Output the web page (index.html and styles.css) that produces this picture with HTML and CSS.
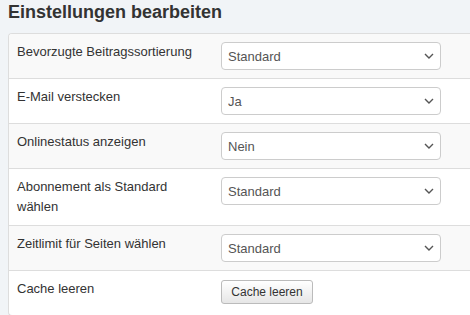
FILE: index.html
```html
<!DOCTYPE html>
<html lang="de">

<head>
    <meta charset="UTF-8">
    <meta name="viewport" content="width=device-width, initial-scale=1.0">
    <title>Einstellungen bearbeiten</title>
    <link rel="stylesheet" href="styles.css">
</head>

<body>
    <h2 class="page-title">Einstellungen bearbeiten</h2>

    <div class="settings-card">
        <table class="settings-table">
            <tr>
                <td class="label-cell">Bevorzugte Beitragssortierung</td>
                <td>
                    <select class="form-select">
                        <option>Standard</option>
                    </select>
                </td>
            </tr>
            <tr>
                <td class="label-cell">E-Mail verstecken</td>
                <td>
                    <select class="form-select">
                        <option>Ja</option>
                    </select>
                </td>
            </tr>
            <tr>
                <td class="label-cell">Onlinestatus anzeigen</td>
                <td>
                    <select class="form-select">
                        <option>Nein</option>
                    </select>
                </td>
            </tr>
            <tr>
                <td class="label-cell">Abonnement als Standard wählen</td>
                <td>
                    <select class="form-select">
                        <option>Standard</option>
                    </select>
                </td>
            </tr>
            <tr>
                <td class="label-cell">Zeitlimit für Seiten wählen</td>
                <td>
                    <select class="form-select">
                        <option>Standard</option>
                    </select>
                </td>
            </tr>
            <tr>
                <td class="label-cell">Cache leeren</td>
                <td>
                    <button type="button" class="btn">Cache leeren</button>
                </td>
            </tr>
        </table>
    </div>
</body>

</html>
```

FILE: styles.css
```css
html {
    overflow: hidden;
}

body {
    font-family: "Liberation Sans", Arial, sans-serif;
    font-size: 13px;
    line-height: 20px;
    color: #333;
    background-color: #f1f4f7;
    margin: 0;
    padding: 2px 0 0 8px;
}

.page-title {
    margin: 0 0 11px;
    font-size: 18px;
    line-height: 20px;
    font-weight: bold;
    color: #333;
}

.settings-card {
    background-color: #fff;
    border: 1px solid #ddd;
    border-right: none;
    border-radius: 4px 0 0 4px;
    overflow: hidden;
}

.settings-table {
    width: 100%;
    border-collapse: collapse;
}

.settings-table td {
    padding: 8px;
    border-top: 1px solid #ddd;
    vertical-align: top;
}

.settings-table tr:first-child td {
    border-top: none;
}

.settings-table tr:nth-child(odd) td {
    background-color: #f9f9f9;
}

.settings-table tr:last-child td {
    padding-bottom: 11px;
}

.label-cell {
    width: 188px;
}

.form-select {
    display: block;
    width: 220px;
    height: 28px;
    margin: 0;
    padding: 0 24px 0 6px;
    font-family: inherit;
    font-size: 13px;
    color: #555;
    background-color: #fff;
    background-image: url("data:image/svg+xml,%3Csvg xmlns='http://www.w3.org/2000/svg' width='10' height='6' viewBox='0 0 10 6'%3E%3Cpath d='M1 1l4 4 4-4' fill='none' stroke='%23555' stroke-width='1.4'/%3E%3C/svg%3E");
    background-repeat: no-repeat;
    background-position: right 6px center;
    border: 1px solid #ccc;
    border-radius: 4px;
    appearance: none;
    -webkit-appearance: none;
}

.btn {
    display: block;
    width: 92px;
    height: 24px;
    margin: 1px 0 0;
    padding: 0;
    font-family: inherit;
    font-size: 12px;
    color: #333;
    text-align: center;
    background: linear-gradient(#fff, #e6e6e6);
    border: 1px solid #bbb;
    border-radius: 3px;
    cursor: pointer;
}
```
